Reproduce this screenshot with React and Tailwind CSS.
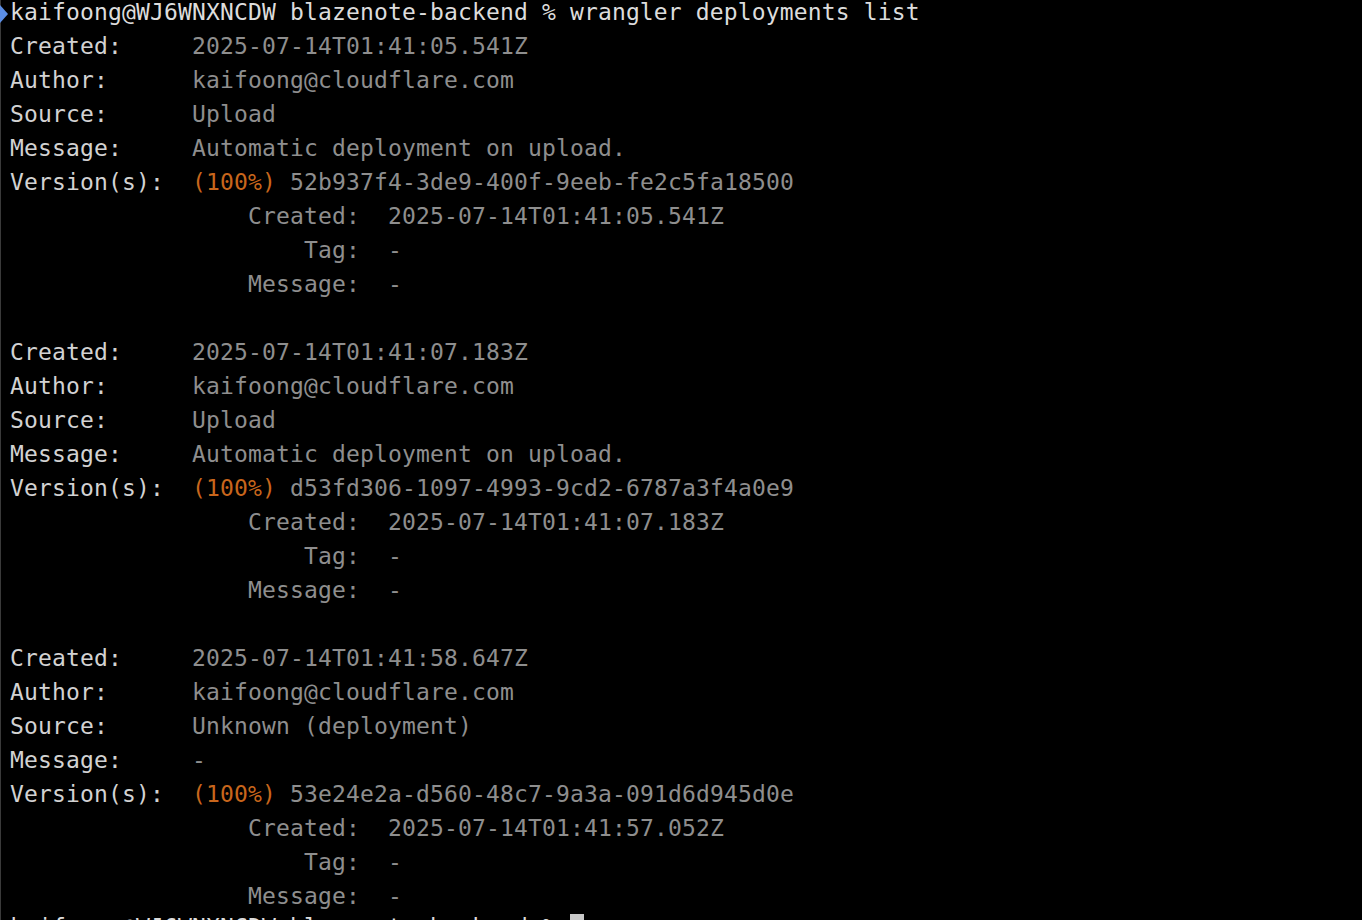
const BLOCKS = [
  {
    created: "2025-07-14T01:41:05.541Z",
    source: "Upload",
    message: "Automatic deployment on upload.",
    version: "52b937f4-3de9-400f-9eeb-fe2c5fa18500",
    vCreated: "2025-07-14T01:41:05.541Z",
  },
  {
    created: "2025-07-14T01:41:07.183Z",
    source: "Upload",
    message: "Automatic deployment on upload.",
    version: "d53fd306-1097-4993-9cd2-6787a3f4a0e9",
    vCreated: "2025-07-14T01:41:07.183Z",
  },
  {
    created: "2025-07-14T01:41:58.647Z",
    source: "Unknown (deployment)",
    message: "-",
    version: "53e24e2a-d560-48c7-9a3a-091d6d945d0e",
    vCreated: "2025-07-14T01:41:57.052Z",
  },
];

const PROMPT = "kaifoong@WJ6WNXNCDW blazenote-backend %";

function Row({ label, children }) {
  return (
    <div className="flex whitespace-pre">
      <span className="w-[182px] shrink-0 text-[#d2d2d2]">{label}</span>
      <span className="text-[#8e8e8e]">{children}</span>
    </div>
  );
}

function SubRow({ label, value }) {
  return (
    <div className="flex whitespace-pre">
      <span className="w-[350px] shrink-0 text-right text-[#8e8e8e]">{label}</span>
      <span className="pl-[28px] text-[#8e8e8e]">{value}</span>
    </div>
  );
}

function Block({ b }) {
  return (
    <div className="flex flex-col">
      <Row label="Created:">{b.created}</Row>
      <Row label="Author:">kaifoong@cloudflare.com</Row>
      <Row label="Source:">{b.source}</Row>
      <Row label="Message:">{b.message}</Row>
      <Row label="Version(s):">
        <span className="text-[#c8661c]">(100%)</span> {b.version}
      </Row>
      <SubRow label="Created:" value={b.vCreated} />
      <SubRow label="Tag:" value="-" />
      <SubRow label="Message:" value="-" />
    </div>
  );
}

export default function App() {
  return (
    <div className="relative h-[920px] w-[1362px] overflow-hidden bg-black">
      {/* left window edge */}
      <div className="absolute left-0 top-0 h-full w-px bg-[#3a3a3a]" />
      {/* prompt mark */}
      <svg className="absolute left-0 top-[5px]" width="9" height="18" viewBox="0 0 9 18">
        <path d="M0 0 L8 9 L0 18 Z" fill="#5b8ee6" />
      </svg>
      <div className="mt-[-5px] pl-[10px] font-['DejaVu_Sans_Mono',monospace] text-[23px] leading-[34px] tracking-[0.15px]">
        <div className="whitespace-pre text-[#dcdcdc]">{PROMPT} wrangler deployments list</div>
        <div className="flex flex-col gap-[34px]">
          {BLOCKS.map((b, i) => (
            <Block key={i} b={b} />
          ))}
        </div>
        <div className="mt-[-3px] flex items-start whitespace-pre text-[#dcdcdc]">
          <span>{PROMPT} </span>
          <span className="mt-[4px] inline-block h-[28px] w-[14px] bg-[#c8c8c8]" />
        </div>
      </div>
    </div>
  );
}
